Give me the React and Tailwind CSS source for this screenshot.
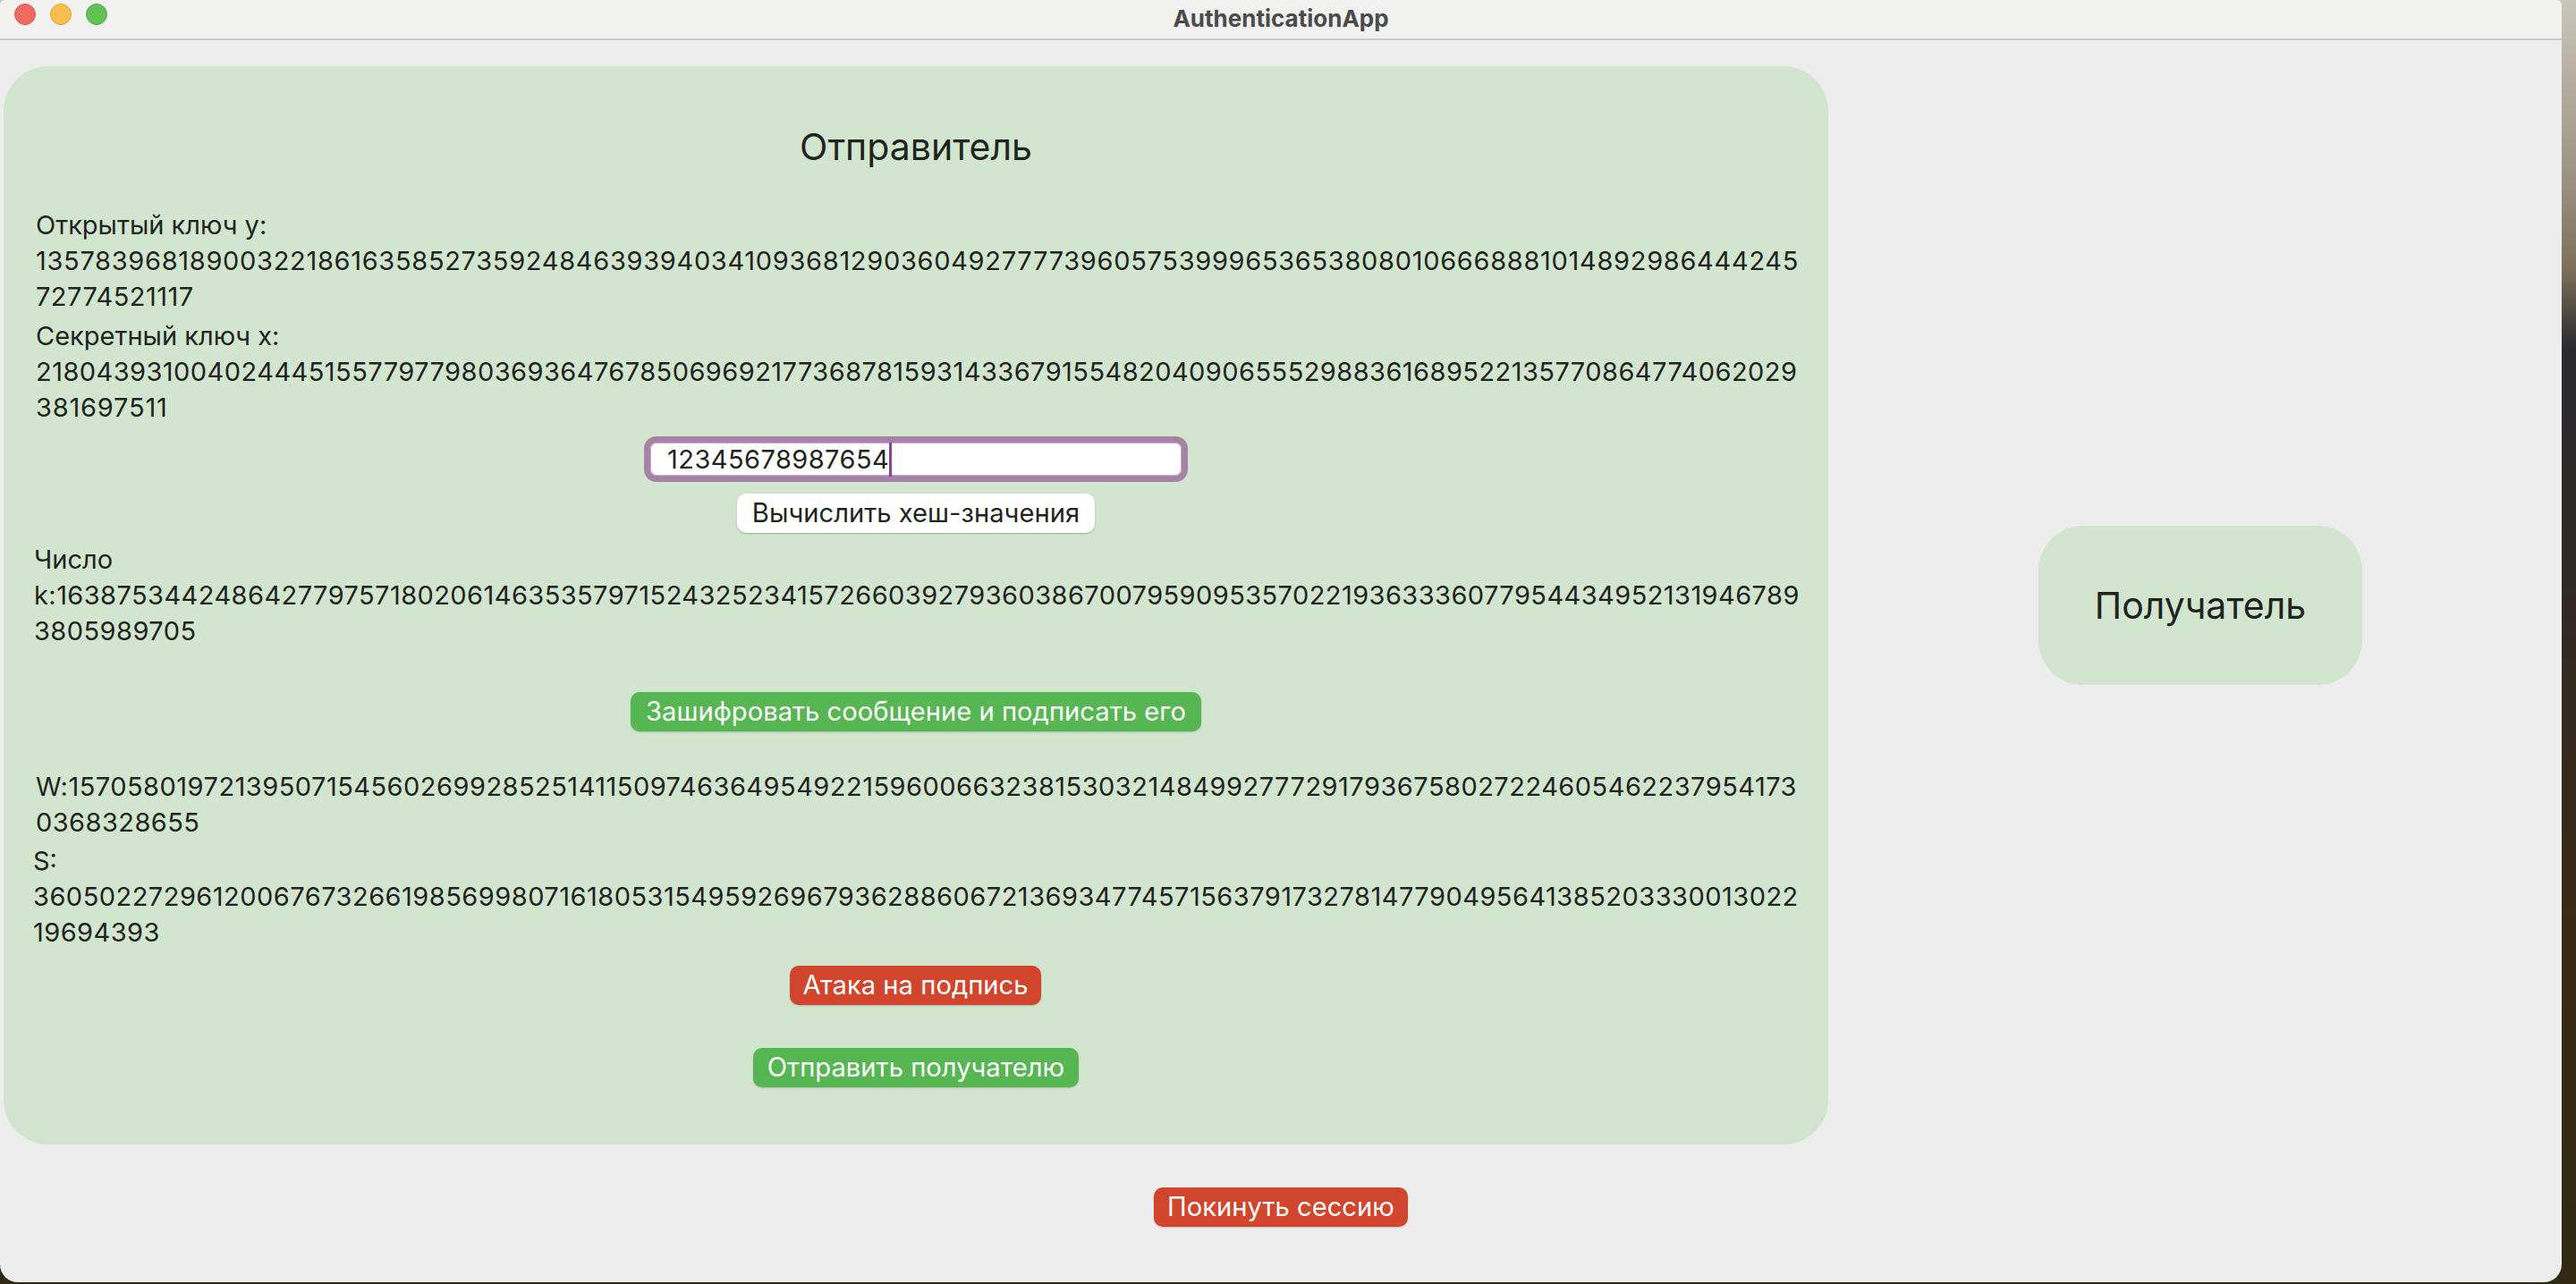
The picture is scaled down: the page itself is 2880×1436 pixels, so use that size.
import React from 'react';

// digit rows carry their own tracking so each one ends where the reference does
const Lines = ({ lines, className = '' }) => (
  <div className={`text-[29px] text-[#1f2421] ${className}`}>
    {lines.map(([text, tracking = '']) => (
      <p key={text} className={`h-10 leading-10 whitespace-nowrap ${tracking}`}>
        {text}
      </p>
    ))}
  </div>
);

const ActionButton = ({ color, children, className = '' }) => (
  <button className={`h-11 rounded-[10px] ${color} text-[29.2px] leading-none text-white shadow-[0_1px_2px_rgba(0,0,0,0.18)] ${className}`}>
    {children}
  </button>
);

export default function App() {
  return (
    <div className="w-screen h-screen overflow-hidden bg-[linear-gradient(180deg,#c9c6ba_0px,#9c9282_200px,#7e7059_300px,#2a2a30_390px,#3a2a15_1036px,#2f2a12_100%)] font-['Inter',sans-serif]">
      <div className="w-[2864px] h-[1434px] flex flex-col rounded-b-[20px] rounded-t-[6px] overflow-hidden bg-[#ededed]">
        {/* Title bar */}
        <header className="relative h-[45px] shrink-0 flex items-center justify-center bg-[#f1f1ef] border-b-2 border-[#c9c9c9]">
          <div className="absolute left-4 top-1 flex gap-4">
            <span className="w-6 h-6 rounded-full bg-[#ef6a5f] border border-[#d85a50]" />
            <span className="w-6 h-6 rounded-full bg-[#f6c050] border border-[#dfa53c]" />
            <span className="w-6 h-6 rounded-full bg-[#5fc455] border border-[#4eab45]" />
          </div>
          <span className="text-[26px] font-bold text-[#4b4b4b] -mt-[3px]">AuthenticationApp</span>
        </header>

        <div className="flex items-start pl-1 pt-[29px]">
          {/* Sender */}
          <section className="w-[2040px] h-[1206px] shrink-0 rounded-[50px] bg-[#d2e5ce] pt-16 flex flex-col">
            <h2 className="h-[52px] text-[41px] leading-[52px] text-center text-[#1f2421]">Отправитель</h2>

            <Lines
              className="mt-[42px] pl-9"
              lines={[
                ['Открытый ключ y:'],
                ['1357839681890032218616358527359248463939403410936812903604927777396057539996536538080106668881014892986444245', 'tracking-[0.69px]'],
                ['72774521117', 'tracking-[0.45px]'],
              ]}
            />
            <Lines
              className="mt-1 pl-9"
              lines={[
                ['Секретный ключ x:'],
                ['218043931004024445155779779803693647678506969217736878159314336791554820409065552988361689522135770864774062029', 'tracking-[0.45px]'],
                ['381697511', 'tracking-[0.8px]'],
              ]}
            />

            <div className="mt-3 ml-[716px] w-[608px] h-[51px] rounded-[14px] border-[7px] border-[#a583a6] bg-white shadow-[inset_0_0_0_1px_#c9a9cc] flex items-center pl-[19px]">
              <span className="text-[29px] tracking-[0.45px] text-[#1f2421]">12345678987654</span>
              <span className="w-[3px] h-[38px] bg-[#8b3f96]" />
            </div>

            <button className="mt-[13px] ml-[820px] w-[400px] h-11 rounded-[10px] bg-white text-[29.2px] leading-none text-[#1f2421] shadow-[0_1px_2px_rgba(0,0,0,0.25)]">
              Вычислить хеш-значения
            </button>

            <Lines
              className="mt-[10px] pl-[34px]"
              lines={[
                ['Число'],
                ['k:16387534424864277975718020614635357971524325234157266039279360386700795909535702219363336077954434952131946789', 'tracking-[0.43px]'],
                ['3805989705', 'tracking-[0.45px]'],
              ]}
            />

            <ActionButton color="bg-[#55b652]" className="mt-12 ml-[701px] w-[638px]">
              Зашифровать сообщение и подписать его
            </ActionButton>

            <Lines
              className="mt-[42px] pl-9"
              lines={[
                ['W:15705801972139507154560269928525141150974636495492215960066323815303214849927772917936758027224605462237954173', 'tracking-[0.48px]'],
                ['0368328655', 'tracking-[0.45px]'],
              ]}
            />
            <Lines
              className="mt-[3px] pl-[33px]"
              lines={[
                ['S:'],
                ['3605022729612006767326619856998071618053154959269679362886067213693477457156379173278147790495641385203330013022', 'tracking-[0.48px]'],
                ['19694393', 'tracking-[0.45px]'],
              ]}
            />

            <ActionButton color="bg-[#d0452c]" className="mt-[17px] ml-[879px] w-[281px]">
              Атака на подпись
            </ActionButton>
            <ActionButton color="bg-[#55b652]" className="mt-12 ml-[838px] w-[364px]">
              Отправить получателю
            </ActionButton>
          </section>

          {/* Receiver */}
          <section className="ml-[235px] mt-[514px] w-[362px] h-[178px] rounded-[50px] bg-[#d2e5ce] flex items-center justify-center">
            <h2 className="text-[41px] text-[#1f2421] mt-[2px]">Получатель</h2>
          </section>
        </div>

        <div className="pl-[1290px] pt-12">
          <ActionButton color="bg-[#d0452c]" className="w-[284px]">
            Покинуть сессию
          </ActionButton>
        </div>
      </div>
    </div>
  );
}
